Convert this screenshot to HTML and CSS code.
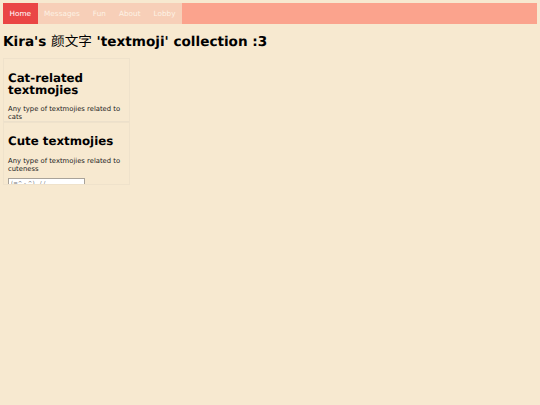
FILE: index.html
```html
<!DOCTYPE html>
<html lang="en">
<head>
<meta charset="utf-8">
<title>Kira's textmoji collection</title>
<link rel="stylesheet" href="styles.css">
</head>
<body>
<nav class="nav">
  <a class="nav-item active" href="#">Home</a>
  <div class="nav-group">
    <a class="nav-item" href="#">Messages</a>
    <a class="nav-item" href="#">Fun</a>
    <a class="nav-item" href="#">About</a>
    <a class="nav-item" href="#">Lobby</a>
  </div>
</nav>
<h1 class="title">Kira's <span class="cjk">颜文字</span> 'textmoji' collection :3</h1>
<section class="card card-cat">
  <h2>Cat-related textmojies</h2>
  <p>Any type of textmojies related to cats</p>
</section>
<section class="card card-cute">
  <h2>Cute textmojies</h2>
  <p>Any type of textmojies related to cuteness</p>
  <input class="moji" type="text" value="(=^ - ^) . / /">
</section>
</body>
</html>
```
FILE: styles.css
```css
html, body {
  margin: 0;
  padding: 0;
}
body {
  background: #f7e9d0;
  color: #000;
  font-family: "DejaVu Sans", "Noto Sans CJK SC", sans-serif;
  text-rendering: geometricPrecision;
  padding: 3px 3px 0;
  height: 405px;
  box-sizing: border-box;
  overflow: hidden;
}
.nav {
  display: flex;
  height: 21px;
  background: #fba38d;
}
.nav-group {
  display: flex;
  background: #f7cfb8;
}
.nav-item {
  display: flex;
  align-items: center;
  padding: 0 6.5px;
  font-size: 7.3px;
  color: #fff;
  text-decoration: none;
}
.nav-group .nav-item {
  color: #fdf2e4;
}
.active {
  background: #ea4545;
}
.title {
  margin: 7px 0 7px;
  font-size: 13.6px;
  line-height: 18px;
  font-weight: bold;
}
.cjk {
  font-family: "Noto Sans CJK SC", sans-serif;
  font-weight: normal;
}
.card {
  width: 127px;
  box-sizing: border-box;
  border: 1px solid #efe2cb;
  padding: 0 4px;
  overflow: hidden;
}
.card h2 {
  margin: 0;
  font-size: 11.8px;
  line-height: 12px;
  font-weight: bold;
}
.card p {
  margin: 9px 0 0;
  font-size: 6.8px;
  line-height: 8px;
  color: #222;
}
.card-cat {
  height: 64px;
  padding-top: 13px;
  border-bottom-color: #ece0cb;
}
.card-cute {
  height: 63px;
  padding-top: 12px;
}
.card-cute p {
  margin-top: 10px;
}
.moji {
  display: block;
  box-sizing: border-box;
  width: 77px;
  height: 10px;
  margin-top: 5px;
  padding: 0 2px;
  border: 1px solid #a9a39a;
  background: #fff;
  font-family: "DejaVu Sans", sans-serif;
  font-size: 5.5px;
  color: #777;
}
```
